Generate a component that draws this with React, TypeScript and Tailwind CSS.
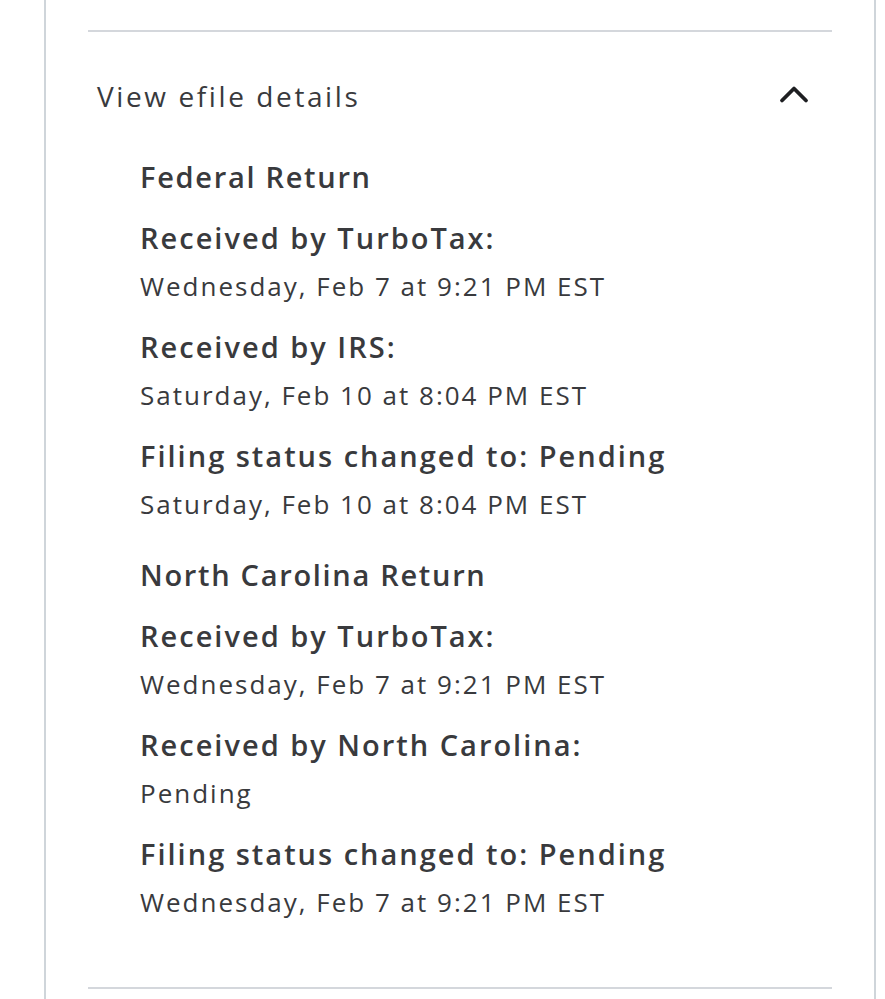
type Event = { label: string; value: string };
type Section = { title: string; events: Event[] };

const sections: Section[] = [
  {
    title: "Federal Return",
    events: [
      { label: "Received by TurboTax:", value: "Wednesday, Feb 7 at 9:21 PM EST" },
      { label: "Received by IRS:", value: "Saturday, Feb 10 at 8:04 PM EST" },
      { label: "Filing status changed to: Pending", value: "Saturday, Feb 10 at 8:04 PM EST" },
    ],
  },
  {
    title: "North Carolina Return",
    events: [
      { label: "Received by TurboTax:", value: "Wednesday, Feb 7 at 9:21 PM EST" },
      { label: "Received by North Carolina:", value: "Pending" },
      { label: "Filing status changed to: Pending", value: "Wednesday, Feb 7 at 9:21 PM EST" },
    ],
  },
];

export default function App() {
  return (
    <div className="min-h-[999px] bg-white font-['Open_Sans',sans-serif] text-[#393a3d]">
      <div className="ml-[44px] mr-[9px] min-h-[999px] border-x-2 border-[#cfd5da] px-[42px] pt-[30px]">
        <div className="border-t-2 border-[#d4d7dc]" />
        <div className="flex items-center justify-between pl-[9px] pr-[22px] pt-[44px]">
          <span className="text-[28px] font-normal leading-[40px] tracking-[2.6px]">View efile details</span>
          {/* chevron-up, collapsed state toggle */}
          <svg width="32" height="32" viewBox="0 0 32 32" fill="none" className="-mt-[3px] text-[#1e1f22]">
            <path d="M4 21.5 16 9.5l12 12" stroke="currentColor" strokeWidth="3.8" strokeLinecap="round" strokeLinejoin="round" />
          </svg>
        </div>
        <div className="pl-[52px] pt-[41px] pb-[65px]">
          {sections.map((s, i) => (
            <div key={s.title} className={i > 0 ? "mt-[31px]" : ""}>
              <h3 className="text-[29px] font-semibold leading-[40px] tracking-[1.7px]">{s.title}</h3>
              {s.events.map((e) => (
                <div key={e.label + e.value} className="mt-[21px]">
                  <p className="text-[29px] font-semibold leading-[40px] tracking-[2px]">{e.label}</p>
                  <p className="text-[26px] leading-[40px] mt-[8px] tracking-[2px]">{e.value}</p>
                </div>
              ))}
            </div>
          ))}
        </div>
        <div className="border-t-2 border-[#d4d7dc]" />
      </div>
    </div>
  );
}
